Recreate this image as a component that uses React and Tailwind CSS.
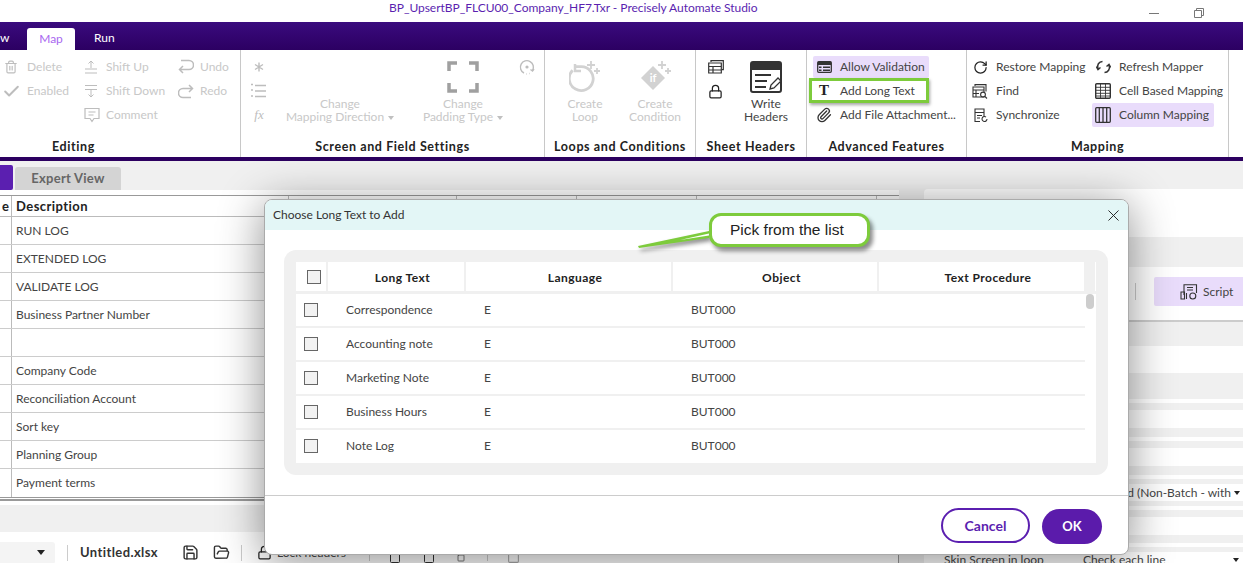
import { Trash2, Check, X, Lock, Paperclip, RotateCw, Save, FolderOpen, Square } from 'lucide-react'

const descriptions = ['RUN LOG', 'EXTENDED LOG', 'VALIDATE LOG', 'Business Partner Number', '', 'Company Code', 'Reconciliation Account', 'Sort key', 'Planning Group', 'Payment terms']
const longTexts = ['Correspondence', 'Accounting note', 'Marketing Note', 'Business Hours', 'Note Log']

function ShiftIcon({ down }) {
  return (
    <svg width="14" height="14" viewBox="0 0 14 14" fill="none" stroke="#bdbdbd" strokeWidth="1">
      {down ? (
        <path d="M1 1.500h12M1 5.500h12M7 5.500v7M4.500 10.500 7 13l2.500-2.500" />
      ) : (
        <path d="M1 9h12M1 13h12M7 8V1.500M4.500 3.500 7 1l2.500 2.500" />
      )}
    </svg>
  )
}

function CommentIcon() {
  return (
    <svg width="16" height="16" viewBox="0 0 16 16" fill="none" stroke="#bdbdbd" strokeWidth="1.200">
      <path d="M1 1.500h14v10h-5l-2 3-2-3H1zM4.500 5h7M4.500 8h5" />
    </svg>
  )
}

function UndoIcon() {
  return (
    <svg width="16" height="16" viewBox="0 0 16 16" fill="none" stroke="#bdbdbd" strokeWidth="1.500">
      <path d="M3 1.500h8a4.500 4.500 0 0 1 0 9H1.500M5 7 1.500 10.500 5 14" />
    </svg>
  )
}

function RedoIcon() {
  return (
    <svg width="16" height="16" viewBox="0 0 16 16" fill="none" stroke="#bdbdbd" strokeWidth="1.500">
      <path d="M13 14.500H5a4.500 4.500 0 0 1 0-9h9.500M11 2l3.500 3.500L11 9" />
    </svg>
  )
}

function Corners() {
  return (
    <svg width="32" height="32" viewBox="0 0 32 32" fill="none" stroke="#a0a0a0" strokeWidth="3.500">
      <path d="M2 10V2h8M22 2h8v8M30 22v8h-8M10 30H2v-8" />
    </svg>
  )
}

function PaddingDotIcon() {
  return (
    <svg width="16" height="16" viewBox="0 0 16 16" fill="none" stroke="#bdbdbd" strokeWidth="1.400">
      <path d="M5 14A6.500 6.500 0 1 1 13.500 11.500" />
      <path d="m11.500 10.500 2 1.500 1.500-2" />
      <circle cx="8" cy="8" r="1.600" fill="#bdbdbd" stroke="none" />
      <path d="M7 15h.5M10 14.500h.5" />
    </svg>
  )
}

function AsteriskIcon() {
  return (
    <svg width="10" height="10" viewBox="0 0 10 10" fill="none" stroke="#bdbdbd" strokeWidth="1.400">
      <path d="M5 .5v9M1 2.500l8 5M9 2.500l-8 5" />
    </svg>
  )
}

function LoopIcon() {
  return (
    <svg width="32" height="32" viewBox="0 0 32 32" fill="none" stroke="#d2d2d2">
      <path d="M5 9a13 13 0 1 0 9-4H7" strokeWidth="3" transform="translate(-1 2) scale(.92)" />
      <path d="M6 4v7h6" strokeWidth="2.500" />
      <path d="M22 1v8M18 5h8M28 8v6M25 11h6" strokeWidth="1.800" />
    </svg>
  )
}

function IfIcon() {
  return (
    <svg width="32" height="32" viewBox="0 0 32 32" fill="none">
      <path d="M14 6 26 18 14 30 2 18z" fill="#d2d2d2" />
      <text x="14" y="22" textAnchor="middle" fontSize="11" fontWeight="700" fill="#fff" fontFamily="Lato, sans-serif">if</text>
      <path d="M23 1v8M19 5h8M29 8v6M26 11h6" stroke="#d2d2d2" strokeWidth="1.800" />
    </svg>
  )
}

function TableIcon({ stacked }) {
  return (
    <svg width="16" height="14" viewBox="0 0 16 14" fill="none" stroke="#333" strokeWidth="1.200">
      {stacked && <path d="M3 2V.7h12.300v9H13.500" />}
      <path d="M.7 3h12.600v10H.7zM.7 6.500h12.600M.7 10h12.600M5 6.500V13" />
    </svg>
  )
}

function WriteHeadersIcon() {
  return (
    <svg width="32" height="32" viewBox="0 0 32 32" fill="none">
      <rect x="1" y="1" width="30" height="30" rx="2" fill="#fff" stroke="#333" strokeWidth="2" />
      <path d="M1 3a2 2 0 0 1 2-2h26a2 2 0 0 1 2 2v6H1z" fill="#333" />
      <path d="M5 14h16M5 20h12M5 26h11" stroke="#333" strokeWidth="2" />
      <path d="m20 28 1-4 7-7 3 3-7 7z" fill="#fff" stroke="#333" strokeWidth="1.300" />
    </svg>
  )
}

function ValidationIcon() {
  return (
    <svg width="15" height="12" viewBox="0 0 15 12">
      <rect x=".7" y=".7" width="13.600" height="10.600" rx="1" fill="none" stroke="#333" strokeWidth="1.300" />
      <path d="M1 1h13v3H1zM6 5.500h7v1.500H6zM6 8.500h7V10H6zM2 5.500h2.500V7H2zM2 8.500h2.500V10H2z" fill="#333" />
    </svg>
  )
}

function FindIcon() {
  return (
    <svg width="16" height="15" viewBox="0 0 16 15" fill="none" stroke="#333" strokeWidth="1.100">
      <path d="M3 2V.6h11v7M1 3h11v10H1zM1 6h11M1 9.500h6M4 6v7" />
      <circle cx="11" cy="10.500" r="2.400" fill="#fff" />
      <path d="m13 12.500 2 2" />
    </svg>
  )
}

function SyncIcon() {
  return (
    <svg width="15" height="15" viewBox="0 0 15 15" fill="none" stroke="#333" strokeWidth="1.100">
      <path d="M7 13.500H2V1h9v7M2 4.500h9M4 7.500h5M4 10h3" />
      <path d="M14 11a2.500 2.500 0 1 1-1-2" />
    </svg>
  )
}

function RefreshIcon() {
  return (
    <svg width="15" height="14" viewBox="0 0 15 14" fill="none" stroke="#333" strokeWidth="1.500">
      <path d="M2 9C.500 5 3 1.500 6.500 1.500M13 5c1.500 4-1 7.500-4.500 7.500" />
      <path d="m.3 6.500 1.700 3 2.500-2M14.700 7.500 13 4.500l-2.500 2" />
    </svg>
  )
}

function GridIcon() {
  return (
    <svg width="16" height="16" viewBox="0 0 16 16" fill="none" stroke="#333" strokeWidth="1.200">
      <rect x=".7" y=".7" width="14.600" height="14.600" rx="1" strokeWidth="1.400" />
      <path d="M.7 4.300h14.600M.7 7.300h14.600M.7 10.300h14.600M.7 13h14.600M5.500.7v14.600M10.500.7v14.600" strokeWidth=".9" />
    </svg>
  )
}

function ColumnsIcon() {
  return (
    <svg width="16" height="16" viewBox="0 0 16 16" fill="none" stroke="#333" strokeWidth="1.300">
      <rect x=".7" y=".7" width="14.600" height="14.600" rx="1" />
      <path d="M4.300.7v14.600M8 .7v14.600M11.700.7v14.600" />
    </svg>
  )
}

function ScriptIcon() {
  return (
    <svg width="18" height="16" viewBox="0 0 18 16" fill="none" stroke="#333" strokeWidth="1.100">
      <path d="M4 11V.7h12.500V9M7 3.500h6M7 6h6" />
      <path d="M1 8h3.500v7H1zM6.500 9v6" />
      <circle cx="12.800" cy="12" r="3" />
    </svg>
  )
}

function Item({ icon, label, iconClass = 'w-[17px]', textClass = 'text-[#444]', className = '' }) {
  return (
    <div className={`flex h-6 items-center whitespace-nowrap ${className}`}>
      <span className={`flex shrink-0 justify-center ${iconClass}`}>{icon}</span>
      <span className={textClass}>{label}</span>
    </div>
  )
}

function BigButton({ icon, lines, caret, muted, className = '' }) {
  return (
    <div className={`flex flex-col items-center leading-[13px] ${muted ? 'text-[#c8c8c8]' : 'text-[#444]'} ${className}`}>
      <div className="flex h-[38px] items-start">{icon}</div>
      <span>{lines[0]}</span>
      <span className="whitespace-nowrap">
        {lines[1]}
        {caret && <span className="ml-1 inline-block border-x-[3px] border-t-[4px] border-x-transparent border-t-[#c0c0c0] align-middle" />}
      </span>
    </div>
  )
}

function Group({ label, width, labelClass = '', children }) {
  return (
    <div className={`flex h-full shrink-0 flex-col border-r border-[#c8c8c8] ${width}`}>
      <div className="h-[84px] pt-[5px]">{children}</div>
      <div className={`mt-[4px] text-center text-[12.500px] font-bold tracking-[0.6px] text-[#222] ${labelClass}`}>{label}</div>
    </div>
  )
}

function Ribbon() {
  return (
    <div className="flex h-[107px] bg-white text-[12px] font-[Lato,sans-serif]">
      <Group label="Editing" width="w-[241px]" labelClass="pr-[93px]">
        <div className="flex text-[#c8c8c8]">
          <div className="ml-[1px] w-[83px]">
            <Item icon={<Trash2 size={14} color="#bdbdbd" />} label="Delete" iconClass="w-[20px] mr-[6px]" textClass="text-[#c8c8c8]" />
            <Item icon={<Check size={19} color="#bdbdbd" strokeWidth={2.500} />} label="Enabled" iconClass="w-[20px] mr-[6px]" textClass="text-[#c8c8c8]" />
          </div>
          <div className="w-[93px]">
            <Item icon={<ShiftIcon />} label="Shift Up" iconClass="w-[14px] mr-[8px]" textClass="text-[#c8c8c8]" />
            <Item icon={<ShiftIcon down />} label="Shift Down" iconClass="w-[14px] mr-[8px]" textClass="text-[#c8c8c8]" />
            <Item icon={<CommentIcon />} label="Comment" iconClass="w-[16px] mr-[6px]" textClass="text-[#c8c8c8]" />
          </div>
          <div>
            <Item icon={<UndoIcon />} label="Undo" iconClass="w-[17px] mr-[6px]" textClass="text-[#c8c8c8]" />
            <Item icon={<RedoIcon />} label="Redo" iconClass="w-[17px] mr-[6px]" textClass="text-[#c8c8c8]" />
          </div>
        </div>
      </Group>
      <Group label="Screen and Field Settings" width="w-[304px]">
        <div className="flex">
          <div className="ml-[9px] w-[18px] text-[#bdbdbd]">
            <div className="flex h-6 items-center justify-center"><AsteriskIcon /></div>
            <svg className="my-[4px]" width="16" height="16" viewBox="0 0 16 16" fill="none" stroke="#bdbdbd" strokeWidth="1.500">
              <path d="M5 2.500h11M5 8h11M5 13.500h11M1 1.500h2M1 7h2M1 13h2" />
            </svg>
            <div className="flex h-6 items-center justify-center font-[Liberation_Serif,serif] text-[13px] italic">fx</div>
          </div>
          <BigButton muted caret lines={['Change', 'Mapping Direction']} icon={null} className="ml-[16px] w-[112px] pt-[6px] [&>div]:h-[36px]" />
          <BigButton muted caret lines={['Change', 'Padding Type']} icon={<Corners />} className="ml-[17px] w-[100px] pt-[6px] [&>div]:h-[36px]" />
          <div className="ml-[6px] flex h-6 items-center">
            <PaddingDotIcon />
          </div>
        </div>
      </Group>
      <Group label="Loops and Conditions" width="w-[151px]">
        <div className="flex">
          <BigButton muted icon={<LoopIcon />} lines={['Create', 'Loop']} className="ml-[10px] w-[60px] pt-[5px] [&>div]:h-[37px]" />
          <BigButton muted icon={<IfIcon />} lines={['Create', 'Condition']} className="ml-[10px] w-[60px] pt-[5px] [&>div]:h-[37px]" />
        </div>
      </Group>
      <Group label="Sheet Headers" width="w-[111px]">
        <div className="flex">
          <div className="ml-[12px] w-[16px]">
            <div className="flex h-6 items-center"><TableIcon stacked /></div>
            <div className="flex h-6 items-center"><Lock size={15} color="#222" strokeWidth={2} /></div>
          </div>
          <BigButton icon={<WriteHeadersIcon />} lines={['Write', 'Headers']} className="ml-[12px] w-[60px] pt-[6px] [&>div]:h-[36px]" />
        </div>
      </Group>
      <Group label="Advanced Features" width="w-[160px]">
        <div className="mt-[1px] ml-[6px] flex h-[22px] w-[116px] items-center rounded-[2px] bg-[#e9dcfb] text-[#444]">
          <span className="ml-[4px] mr-[8px] flex"><ValidationIcon /></span>Allow Validation
        </div>
        <div className="ml-[2px] flex h-[25px] w-[120px] items-center border-[3px] border-[#7dcb3c] bg-white text-[#444] shadow-[1px_2px_3px_rgba(0,0,0,0.35)]">
          <span className="ml-[7px] mr-[9px] w-[12px] font-[Liberation_Serif,serif] text-[15px] font-bold leading-none text-[#222]">T</span>Add Long Text
        </div>
        <div className="flex h-6 items-center whitespace-nowrap text-[#444]">
          <span className="ml-[9px] mr-[8px] flex"><Paperclip size={16} color="#333" /></span>Add File Attachment...
        </div>
      </Group>
      <Group label="Mapping" width="w-[262px]">
        <div className="flex">
          <div className="ml-[5px] w-[120px]">
            <Item icon={<RotateCw size={15} color="#222" strokeWidth={2} />} label="Restore Mapping" iconClass="w-[16px] mr-[8px]" />
            <Item icon={<FindIcon />} label="Find" iconClass="w-[16px] mr-[8px]" />
            <Item icon={<SyncIcon />} label="Synchronize" iconClass="w-[16px] mr-[8px]" />
          </div>
          <div>
            <Item icon={<RefreshIcon />} label="Refresh Mapper" iconClass="w-[16px] mr-[8px] ml-[3px]" />
            <Item icon={<GridIcon />} label="Cell Based Mapping" iconClass="w-[16px] mr-[8px] ml-[3px]" />
            <Item icon={<ColumnsIcon />} label="Column Mapping" iconClass="w-[16px] mr-[8px] ml-[3px]" className="w-[122px] rounded-[2px] bg-[#e9dcfb]" />
          </div>
        </div>
      </Group>
    </div>
  )
}

function LeftPanel() {
  return (
    <div className="flex w-[899px] shrink-0 flex-col font-[Lato,sans-serif]">
      <div className="flex h-[29px] items-end gap-[2px]">
        <div className="h-[25px] w-[13px] rounded-r-[2px] bg-[#5b1fb0]" />
        <div className="flex h-[23px] w-[106px] items-center justify-center rounded-t-[3px] bg-[#d4d4d4] text-[13px] font-bold tracking-[0.25px] text-[#666]">Expert View</div>
      </div>
      <div className="h-[5px] bg-white" />
      <div className="border-y border-[#999] bg-white">
        <div className="flex h-[21px] items-center border-b border-[#bbb] text-[13px] font-bold text-[#222]">
          <span className="w-[12px] border-r border-[#bbb] pl-[2px] leading-[21px]">e</span>
          <span className="ml-[4px] w-[273px] border-r border-[#bbb] leading-[21px] tracking-[0.45px]">Description</span>
          <span className="h-full w-[168px] border-r border-[#bbb]" />
          <span className="h-full w-[120px] border-r border-[#bbb]" />
          <span className="h-full w-[120px] border-r border-[#bbb]" />
          <span className="h-full w-[180px] border-r border-[#bbb]" />
        </div>
        {descriptions.map((d, i) => (
          <div key={i} className="flex h-[28px] border-b border-[#ccc] text-[12px] text-[#444] last:border-b-0">
            <span className="w-[12px] border-r border-[#bbb]" />
            <span className="ml-[4px] leading-[27px]">{d}</span>
          </div>
        ))}
      </div>
      <div className="h-[1px] bg-white" />
      <div className="h-[2px] bg-[#9a9a9a]" />
      <div className="h-[4px] bg-white" />
      <div className="h-[27px] bg-[#f0f0f0]" />
      <div className="h-[4px] bg-white" />
      <BottomToolbar />
    </div>
  )
}

function BottomToolbar() {
  return (
    <div className="flex min-h-0 flex-1 items-center border-r border-[#999] bg-white pt-[6px] text-[12px]">
      <div className="flex h-[22px] w-[55px] items-center justify-end rounded-r-[3px] bg-[#f4f4f4] pr-[10px]">
        <span className="border-x-[4px] border-t-[5px] border-x-transparent border-t-[#222]" />
      </div>
      <div className="ml-[12px] h-[16px] w-px bg-[#ccc]" />
      <span className="ml-[12px] w-[79px] text-[13px] font-bold tracking-[0.4px] text-[#333]">Untitled.xlsx</span>
      <span className="ml-[23px] flex"><Save size={17} color="#333" /></span>
      <span className="ml-[14px] flex"><FolderOpen size={17} color="#333" /></span>
      <div className="ml-[11px] h-[16px] w-px bg-[#ccc]" />
      <span className="ml-[15px] flex"><Lock size={15} color="#222" strokeWidth={2} /></span>
      <span className="ml-[5px] w-[92px] text-[#444]">Lock headers</span>
      <div className="h-[16px] w-px bg-[#ccc]" />
      <span className="ml-[19px] flex translate-y-[5px]"><Square size={12} color="#333" /></span>
      <span className="ml-[22px] flex translate-y-[5px]"><Square size={12} color="#333" /></span>
      <span className="ml-[22px] flex translate-y-[5px]"><Square size={8} color="#333" /></span>
      <div className="ml-[22px] h-[16px] w-px bg-[#ccc]" />
      <span className="ml-[19px] flex translate-y-[5px]"><Square size={13} color="#aaa" /></span>
    </div>
  )
}

function RightPanel() {
  return (
    <div className="ml-[25px] flex min-w-0 flex-1 flex-col pt-[28px] font-[Lato,sans-serif] text-[12px] text-[#444] [&>div]:shrink-0">
      <div className="h-[48px] rounded-tl-[4px] bg-white" />
      <div className="h-[30px] bg-[#f0f0f0]" />
      <div className="flex h-[53px] items-start justify-end bg-white pt-[10px]">
        <div className="mt-[6px] mr-[18px] h-[17px] w-px bg-[#ccc]" />
        <div className="flex h-[29px] w-[89px] items-center gap-[5px] rounded-l-[2px] bg-[#e9dcfb] pl-[26px]">
          <ScriptIcon /><span>Script</span>
        </div>
      </div>
      <div className="h-[2px] bg-[#ccc]" />
      <div className="h-[24px] bg-[#f0f0f0]" />
      <div className="h-[27px] bg-white" />
      <div className="h-[26px] bg-[#f0f0f0]" />
      <div className="h-[4px] bg-white" />
      <div className="h-[7px] bg-[#f0f0f0]" />
      <div className="h-[18px] bg-white" />
      <div className="h-[9px] bg-[#f0f0f0]" />
      <div className="h-[4px] bg-white" />
      <div className="h-[7px] bg-[#f0f0f0]" />
      <div className="h-[18px] bg-white" />
      <div className="h-[9px] bg-[#f0f0f0]" />
      <div className="h-[4px] bg-white" />
      <div className="h-[5px] bg-[#f0f0f0]" />
      <div className="flex h-[17px] items-center justify-end whitespace-nowrap bg-white pr-[3px]">
        d (Non-Batch - with
        <span className="ml-[3px] border-x-[3.500px] border-t-[4px] border-x-transparent border-t-[#222]" />
      </div>
      <div className="h-[5px] bg-[#f0f0f0]" />
      <div className="h-[4px] bg-white" />
      <div className="h-[7px] bg-[#f0f0f0]" />
      <div className="h-[18px] bg-white" />
      <div className="h-[8px] bg-[#f0f0f0]" />
      <div className="h-[4px] bg-white" />
      <div className="h-[5px] bg-[#f0f0f0]" />
      <div className="flex h-[16px] items-center whitespace-nowrap bg-white pl-[20px]">
        <span className="w-[139px]">Skin Screen in loop</span>
        <span>Check each line</span>
        <span className="ml-auto mr-[4px] border-x-[3.500px] border-t-[4px] border-x-transparent border-t-[#222]" />
      </div>
    </div>
  )
}

function CheckBox() {
  return <span className="block size-[14px] border border-[#666] bg-[#f2f2f2]" />
}

function Modal() {
  return (
    <div className="absolute left-[264px] top-[199px] flex h-[356px] w-[865px] flex-col overflow-hidden rounded-[8px] border border-[#aaa] bg-white font-[Lato,sans-serif] shadow-[0_6px_45px_rgba(0,0,0,0.45)]">
      <div className="flex h-[30px] shrink-0 items-center justify-between bg-[#e3f6f6] pl-[8px] pr-[5px] text-[12px] text-[#333]">
        Choose Long Text to Add
        <X size={19} color="#222" strokeWidth={1.200} />
      </div>
      <div className="ml-[19px] mr-[20px] mt-[20px] h-[225px] shrink-0 rounded-[12px] bg-[#f0f0f0] p-[12px]">
        <div className="h-[201px] bg-white">
          <div className="flex h-[29px] bg-white text-center text-[12px] font-bold leading-[31px] tracking-[0.45px] text-[#222]">
            <span className="w-[30px] pl-[11px] pt-[8px]"><CheckBox /></span>
            <span className="w-[2px] bg-[#f0f0f0]" />
            <span className="w-[136px] pl-[13px]">Long Text</span>
            <span className="w-[2px] bg-[#f0f0f0]" />
            <span className="w-[205px] pl-[13px]">Language</span>
            <span className="w-[2px] bg-[#f0f0f0]" />
            <span className="w-[204px] pl-[13px]">Object</span>
            <span className="w-[2px] bg-[#f0f0f0]" />
            <span className="w-[205px] pl-[13px]">Text Procedure</span>
            <span className="w-[12px] border-r border-white bg-[#f0f0f0]" />
          </div>
          <div className="h-[3px] bg-[#f0f0f0]" />
          <div className="flex">
            <div className="w-[789px] shrink-0">
              {longTexts.map((t) => (
                <div key={t} className="flex h-[34px] items-center border-b-2 border-[#f0f0f0] text-[12px] text-[#444] last:border-transparent">
                  <span className="ml-[8px] w-[42px]"><CheckBox /></span>
                  <span className="w-[138px]">{t}</span>
                  <span className="w-[207px]">E</span>
                  <span>BUT000</span>
                </div>
              ))}
            </div>
            <div className="ml-[1px] h-[15px] w-[8px] rounded-full bg-[#cdcdcd]" />
          </div>
        </div>
      </div>
      <div className="mt-[20px] h-px shrink-0 bg-[#ccc]" />
      <div className="flex items-start justify-end gap-[12px] pr-[26px] pt-[12px]">
        <button className="h-[35px] w-[89px] rounded-full border-2 border-[#5b1fb0] text-[14px] font-bold text-[#5b1fb0]">Cancel</button>
        <button className="mt-[1px] h-[35px] w-[60px] rounded-full bg-[#5b1bab] text-[13px] font-bold text-white">OK</button>
      </div>
    </div>
  )
}

function Callout() {
  return (
    <>
      <svg className="absolute left-[636px] top-[228px] drop-shadow-[2px_3px_2px_rgba(0,0,0,0.45)]" width="76" height="24" viewBox="0 0 76 24">
        <path d="M2 18 73 3v7L3 20z" fill="#7dcb3c" />
        <path d="M44 12 73 5.500v2z" fill="#fff" />
      </svg>
      <div className="absolute left-[709px] top-[213px] flex h-[34px] w-[161px] items-center rounded-[12px] border-[3px] border-[#7dcb3c] bg-white pl-[18px] font-['Liberation_Sans',sans-serif] text-[15.500px] text-[#222] shadow-[3px_4px_4px_rgba(0,0,0,0.45)]">
        Pick from the list
      </div>
    </>
  )
}

export default function App() {
  return (
    <div className="relative flex h-[563px] w-[1243px] flex-col overflow-hidden bg-[#f0f0f0]">
      {/* Title bar */}
      <div className="flex h-[22px] shrink-0 items-center bg-white pl-[389px] font-[Lato,sans-serif] text-[12px] text-[#5b1fb0]">
        <span className="-mt-[6px] tracking-[-0.03px]">BP_UpsertBP_FLCU00_Company_HF7.Txr - Precisely Automate Studio</span>
        <span className="ml-auto mt-[4px] h-px w-[10px] bg-[#777]" />
        <svg className="ml-[35px] mr-[39px] mt-[4px]" width="10" height="10" viewBox="0 0 10 10" fill="none" stroke="#777">
          <path d="M.5 2.500h7v7h-7zM2.500 2.500V.5h7v7h-2" />
        </svg>
      </div>

      {/* Tabs */}
      <div className="flex h-[28px] shrink-0 items-end bg-gradient-to-b from-[#3a0c7e] to-[#2c0062] font-[Lato,sans-serif] text-[12px] text-white">
        <span className="w-[27px] pb-[3px]">w</span>
        <span className="flex h-[22px] w-[48px] items-center justify-center rounded-t-[3px] bg-white text-[#a868f0]">Map</span>
        <span className="ml-[19px] pb-[3px]">Run</span>
      </div>

      <Ribbon />
      <div className="h-[4px] shrink-0 bg-[#2c0060]" />

      {/* Workspace */}
      <div className="flex min-h-0 flex-1">
        <LeftPanel />
        <RightPanel />
      </div>

      <Modal />
      <Callout />
    </div>
  )
}
